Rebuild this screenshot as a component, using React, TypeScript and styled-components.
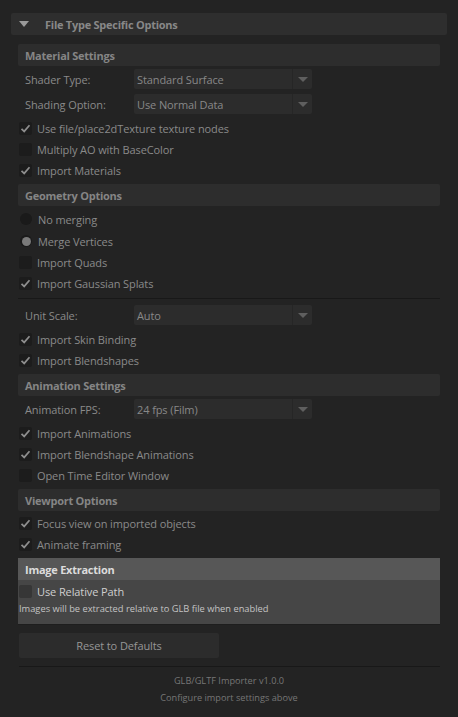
import React from "react";
import styled, { createGlobalStyle } from "styled-components";

const GlobalStyle = createGlobalStyle`
  html, body {
    margin: 0;
    padding: 0;
    background: #232323;
  }
  body {
    font-family: "Open Sans", "Noto Sans", sans-serif;
    font-size: 11px;
    letter-spacing: -0.1px;
    color: #8a8a8a;
  }
`;

const Page = styled.div`
  display: flex;
  flex-direction: column;
  padding: 13px 11px 0;
  width: 458px;
  height: 717px;
  box-sizing: border-box;
`;

const FrameHeader = styled.div`
  display: flex;
  align-items: center;
  height: 22px;
  background: #2e2e2e;
  border-radius: 2px;
  padding-left: 8px;
  gap: 16px;
  font-weight: 700;
  letter-spacing: -0.25px;
  color: #888;
`;

const Triangle = styled.div`
  width: 0;
  height: 0;
  border-left: 5.5px solid transparent;
  border-right: 5.5px solid transparent;
  border-top: 6px solid #9a9a9a;
`;

const Content = styled.div`
  display: flex;
  flex-direction: column;
  padding: 9px 7px 0;
`;

const SectionHeader = styled.div<{ $first?: boolean }>`
  display: flex;
  align-items: center;
  height: 22px;
  margin-top: ${(p) => (p.$first ? "0" : "3px")};
  margin-bottom: 2px;
  padding-left: 7px;
  background: #2d2d2d;
  border-radius: 2px;
  font-weight: 700;
  letter-spacing: -0.25px;
  color: #858585;
`;

const FieldRow = styled.div`
  display: flex;
  align-items: center;
  height: 20px;
  margin: 1px 0 4px;
  padding-left: 7px;
`;

const FieldLabel = styled.div`
  width: 109px;
`;

const Select = styled.div`
  display: flex;
  width: 178px;
  height: 20px;
  background: #2c2c2c;
  border-radius: 2px;
  overflow: hidden;
`;

const SelectValue = styled.div`
  flex: 1;
  display: flex;
  align-items: center;
  padding-left: 3px;
  color: #888;
  border-right: 1px solid #262626;
`;

const SelectArrow = styled.div`
  width: 19px;
  display: flex;
  align-items: center;
  justify-content: center;

  &::after {
    content: "";
    border-left: 5px solid transparent;
    border-right: 5px solid transparent;
    border-top: 5px solid #5f5f5f;
  }
`;

const OptionRow = styled.div<{ $tall?: boolean; $bright?: boolean }>`
  display: flex;
  align-items: center;
  height: ${(p) => (p.$tall ? "22px" : "21px")};
  padding-left: 1px;
  gap: 5px;
  color: ${(p) => (p.$bright ? "#cfcfcf" : "#8a8a8a")};
`;

const Box = styled.div<{ $bright?: boolean }>`
  width: 13px;
  height: 13px;
  border-radius: 2px;
  background: ${(p) => (p.$bright ? "#363636" : "#1c1c1c")};
  display: flex;
  align-items: center;
  justify-content: center;
`;

const Radio = styled.div`
  width: 12px;
  height: 12px;
  margin-left: 1px;
  margin-right: 1px;
  border-radius: 50%;
  background: #1a1a1a;
  display: flex;
  align-items: center;
  justify-content: center;
`;

const RadioDot = styled.div`
  width: 9px;
  height: 9px;
  border-radius: 50%;
  background: #7a7a7a;
`;

const Separator = styled.div<{ $gap?: string }>`
  height: 1px;
  background: #181818;
  margin: ${(p) => p.$gap ?? "4px 0 5px"};
`;

const Extraction = styled.div`
  display: flex;
  flex-direction: column;
  margin-top: 3px;
  background: #464646;
  padding-bottom: 8px;
  border-bottom: 1px solid #1e1e1e;
`;

const ExtractionHeader = styled.div`
  display: flex;
  align-items: center;
  height: 22px;
  padding-left: 7px;
  margin-bottom: 1px;
  background: #575757;
  font-weight: 700;
  letter-spacing: -0.25px;
  color: #dcdcdc;
`;

const Note = styled.div`
  height: 14px;
  line-height: 14px;
  padding-left: 1px;
  font-size: 9.3px;
  letter-spacing: 0;
  color: #c4c4c4;
`;

const ResetButton = styled.div`
  display: flex;
  align-items: center;
  justify-content: center;
  width: 200px;
  height: 25px;
  margin: 8px 0 0 1px;
  background: #2c2c2c;
  border-radius: 2px;
  color: #969696;
`;

const Footer = styled.div`
  display: flex;
  flex-direction: column;
  align-items: center;
  padding-top: 7px;
  gap: 3px;
  font-size: 9.2px;
  line-height: 14px;
  letter-spacing: 0;
  color: #767676;
`;

const Check = ({ bright }: { bright?: boolean }) => (
  <svg width="11" height="11" viewBox="0 0 11 11">
    <path
      d="M1.5 5.8 L4.2 8.4 L9.5 2.2"
      fill="none"
      stroke={bright ? "#cfcfcf" : "#8e8e8e"}
      strokeWidth="1.7"
    />
  </svg>
);

const CheckOption = ({
  label,
  checked,
  bright,
}: {
  label: string;
  checked?: boolean;
  bright?: boolean;
}) => (
  <OptionRow $bright={bright}>
    <Box $bright={bright}>{checked && <Check bright={bright} />}</Box>
    {label}
  </OptionRow>
);

const RadioOption = ({ label, selected }: { label: string; selected?: boolean }) => (
  <OptionRow $tall>
    <Radio>{selected && <RadioDot />}</Radio>
    {label}
  </OptionRow>
);

const Dropdown = ({ label, value }: { label: string; value: string }) => (
  <FieldRow>
    <FieldLabel>{label}</FieldLabel>
    <Select>
      <SelectValue>{value}</SelectValue>
      <SelectArrow />
    </Select>
  </FieldRow>
);

export default function App() {
  return (
    <>
      <GlobalStyle />
      <Page>
        <FrameHeader>
          <Triangle />
          File Type Specific Options
        </FrameHeader>
        <Content>
          <SectionHeader $first>Material Settings</SectionHeader>
          <Dropdown label="Shader Type:" value="Standard Surface" />
          <Dropdown label="Shading Option:" value="Use Normal Data" />
          <CheckOption label="Use file/place2dTexture texture nodes" checked />
          <CheckOption label="Multiply AO with BaseColor" />
          <CheckOption label="Import Materials" checked />

          <SectionHeader>Geometry Options</SectionHeader>
          <RadioOption label="No merging" />
          <RadioOption label="Merge Vertices" selected />
          <CheckOption label="Import Quads" />
          <CheckOption label="Import Gaussian Splats" checked />

          <Separator />
          <Dropdown label="Unit Scale:" value="Auto" />
          <CheckOption label="Import Skin Binding" checked />
          <CheckOption label="Import Blendshapes" checked />

          <SectionHeader>Animation Settings</SectionHeader>
          <Dropdown label="Animation FPS:" value="24 fps (Film)" />
          <CheckOption label="Import Animations" checked />
          <CheckOption label="Import Blendshape Animations" checked />
          <CheckOption label="Open Time Editor Window" />

          <SectionHeader>Viewport Options</SectionHeader>
          <CheckOption label="Focus view on imported objects" checked />
          <CheckOption label="Animate framing" checked />

          <Extraction>
            <ExtractionHeader>Image Extraction</ExtractionHeader>
            <CheckOption label="Use Relative Path" bright />
            <Note>Images will be extracted relative to GLB file when enabled</Note>
          </Extraction>

          <ResetButton>Reset to Defaults</ResetButton>
          <Separator $gap="8px 0 0 1px" />
          <Footer>
            <div>GLB/GLTF Importer v1.0.0</div>
            <div>Configure import settings above</div>
          </Footer>
        </Content>
      </Page>
    </>
  );
}
